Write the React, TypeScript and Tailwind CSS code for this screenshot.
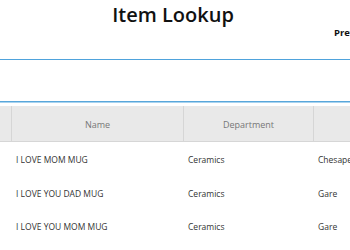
import React from "react";

const rows = [
  { name: "I LOVE MOM MUG", dept: "Ceramics", loc: "Chesapeake" },
  { name: "I LOVE YOU DAD MUG", dept: "Ceramics", loc: "Gare" },
  { name: "I LOVE YOU MOM MUG", dept: "Ceramics", loc: "Gare" },
];

export default function App() {
  return (
    <div
      className="w-[350px] h-[250px] bg-white overflow-hidden flex flex-col"
      style={{ fontFamily: '"Open Sans", "Noto Sans", sans-serif' }}
    >
      <div className="h-[28px] flex items-center justify-center pt-[1px] pr-[4px] shrink-0">
        <span className="text-[20px] leading-none text-[#111] font-semibold">Item Lookup</span>
      </div>
      <div className="h-[10px] flex whitespace-nowrap shrink-0">
        <span className="ml-[334px] text-[9.5px] leading-[10px] font-bold text-[#111]">Previous</span>
      </div>
      <div className="h-[21px] shrink-0" />
      <div className="h-[1px] bg-[#4fa3dc] shrink-0" />
      <div className="h-[41px] shrink-0" />
      <div className="h-[1px] bg-[#58a6da] shrink-0" />
      <div className="h-[1px] bg-[#a9d3ef] shrink-0" />
      <div className="h-[3px] shrink-0" />
      <div className="flex h-[36px] shrink-0 bg-[#e9e9e9] border-b border-[#d6d6d6] text-[9px] text-[#777] whitespace-nowrap">
        <div className="w-[12px] shrink-0 border-r border-[#d6d6d6]" />
        <div className="w-[172px] shrink-0 border-r border-[#d6d6d6] flex items-center justify-center pt-[3px]">Name</div>
        <div className="w-[130px] shrink-0 border-r border-[#d6d6d6] flex items-center justify-center pt-[3px]">Department</div>
        <div className="flex-1" />
      </div>
      <div className="flex flex-col text-[8.5px] text-[#333] whitespace-nowrap pt-[2px]">
        {rows.map((r) => (
          <div key={r.name} className="flex h-[33.5px] items-center shrink-0">
            <div className="w-[16px] shrink-0" />
            <div className="w-[172px] shrink-0">{r.name}</div>
            <div className="w-[130px] shrink-0">{r.dept}</div>
            <div className="shrink-0">{r.loc}</div>
          </div>
        ))}
      </div>
    </div>
  );
}
